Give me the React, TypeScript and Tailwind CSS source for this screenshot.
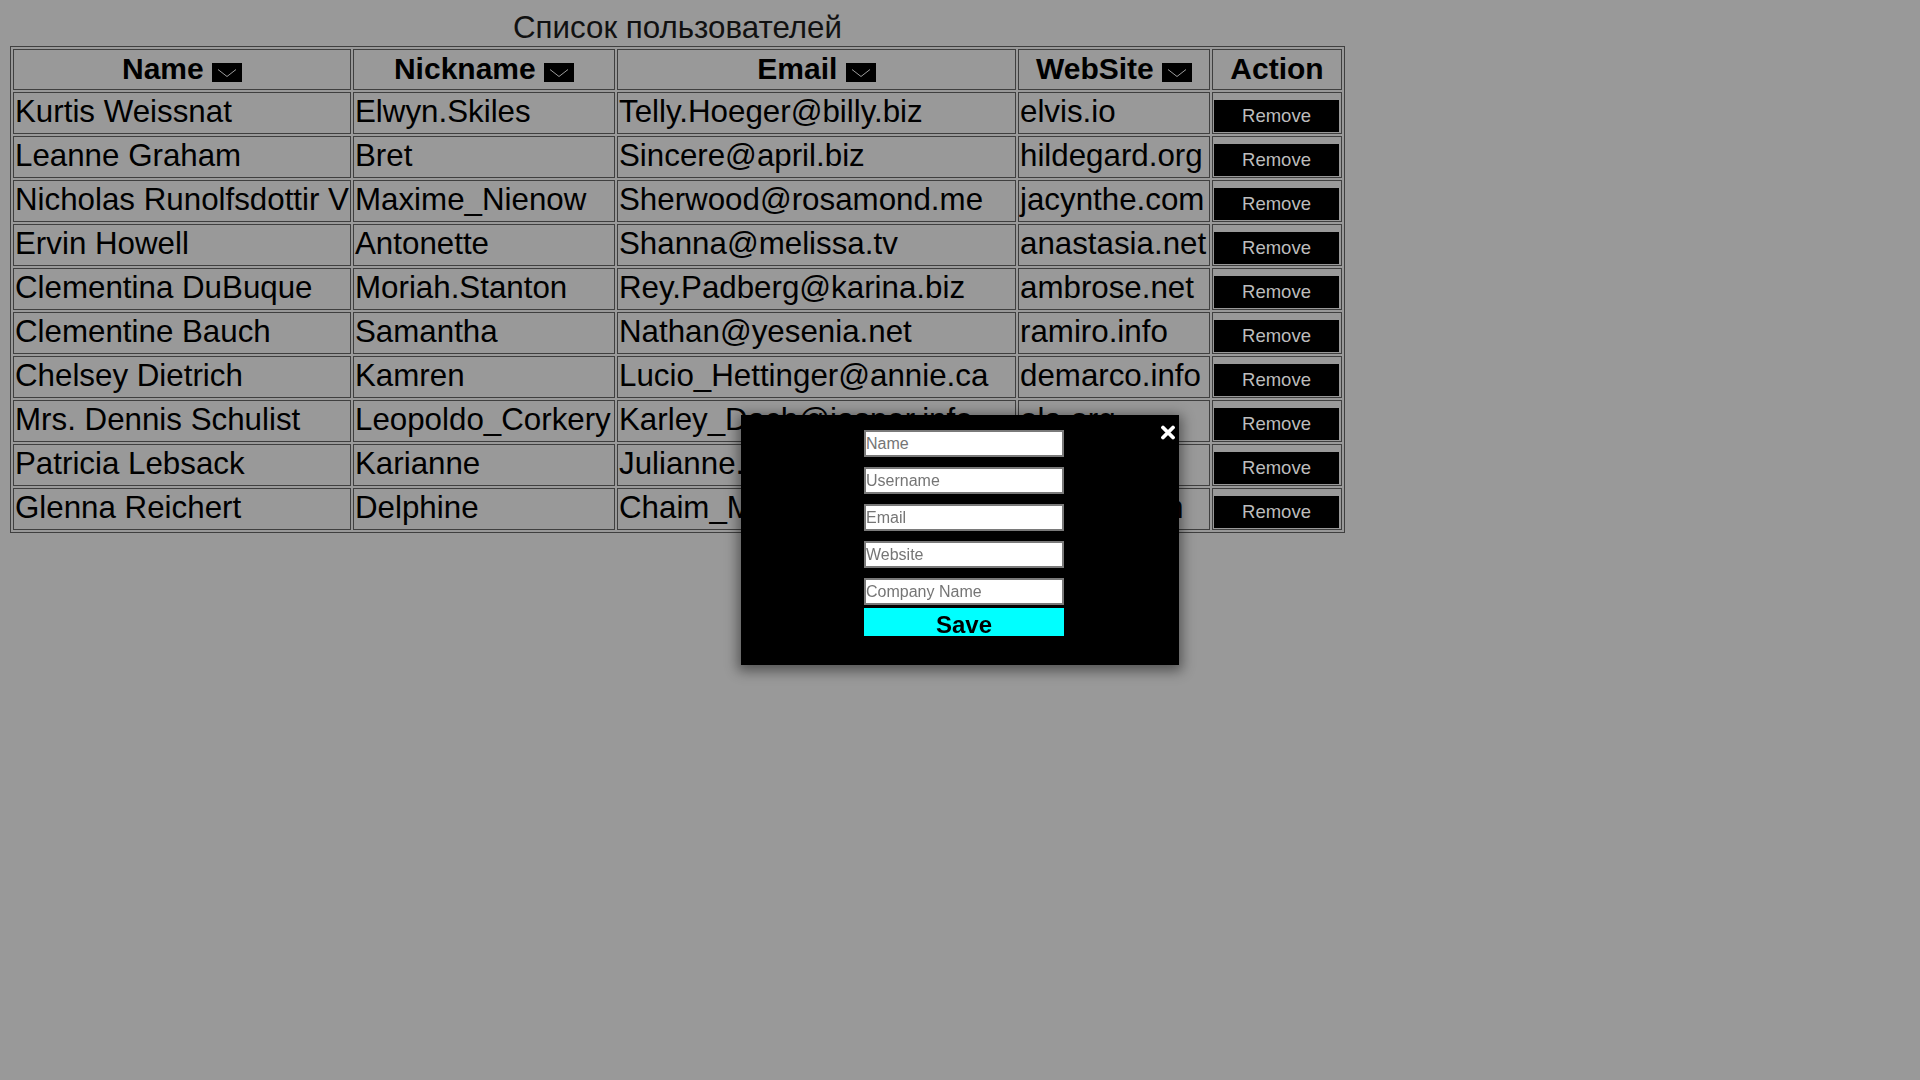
import { useState } from "react"

interface User {
  name: string
  username: string
  email: string
  website: string
}

const users: User[] = [
  { name: "Kurtis Weissnat", username: "Elwyn.Skiles", email: "Telly.Hoeger@billy.biz", website: "elvis.io" },
  { name: "Leanne Graham", username: "Bret", email: "Sincere@april.biz", website: "hildegard.org" },
  { name: "Nicholas Runolfsdottir V", username: "Maxime_Nienow", email: "Sherwood@rosamond.me", website: "jacynthe.com" },
  { name: "Ervin Howell", username: "Antonette", email: "Shanna@melissa.tv", website: "anastasia.net" },
  { name: "Clementina DuBuque", username: "Moriah.Stanton", email: "Rey.Padberg@karina.biz", website: "ambrose.net" },
  { name: "Clementine Bauch", username: "Samantha", email: "Nathan@yesenia.net", website: "ramiro.info" },
  { name: "Chelsey Dietrich", username: "Kamren", email: "Lucio_Hettinger@annie.ca", website: "demarco.info" },
  { name: "Mrs. Dennis Schulist", username: "Leopoldo_Corkery", email: "Karley_Dach@jasper.info", website: "ola.org" },
  { name: "Patricia Lebsack", username: "Karianne", email: "Julianne.OConner@kory.org", website: "kale.io" },
  { name: "Glenna Reichert", username: "Delphine", email: "Chaim_McDermott@dana.io", website: "conrad.com" },
]

const SortBox = () => (
  <span className="inline-block w-[30px] h-[19px] bg-black align-[-3px]">
    <svg width="30" height="19" viewBox="0 0 30 19">
      <polyline points="6,6.5 15,13.5 24,6.5" fill="none" stroke="#9c9c9c" strokeWidth="1" />
    </svg>
  </span>
)

const th = "border border-[#3f3f3f] p-0 text-[30px] font-bold leading-[37px] align-top text-center"
const td = "border border-[#3f3f3f] px-px py-0 text-[31.3px] leading-[37px] align-top whitespace-nowrap overflow-hidden text-left font-normal"

const App = () => {
  const [rows, setRows] = useState(users)
  const fields = ["Name", "Username", "Email", "Website", "Company Name"]

  return (
    <div className="min-h-screen bg-[#999999] px-[10px] pt-[9px] font-['Liberation_Sans',Arial,sans-serif] text-black">
      <table className="table-fixed border-separate border-spacing-[2px] border border-[#3f3f3f] w-[1335px]">
        <caption className="text-[31.3px] leading-[37px] text-[#111]">Список пользователей</caption>
        <colgroup>
          <col className="w-[338px]" />
          <col className="w-[262px]" />
          <col className="w-[399px]" />
          <col className="w-[192px]" />
          <col className="w-[130px]" />
        </colgroup>
        <thead>
          <tr className="h-[41px]">
            <th className={th}>Name <SortBox /></th>
            <th className={th}>Nickname <SortBox /></th>
            <th className={th}>Email <SortBox /></th>
            <th className={th}>WebSite <SortBox /></th>
            <th className={th}>Action</th>
          </tr>
        </thead>
        <tbody>
          {rows.map((u) => (
            <tr key={u.email} className="h-[42px]">
              <td className={td}>{u.name}</td>
              <td className={td}>{u.username}</td>
              <td className={td}>{u.email}</td>
              <td className={td}>{u.website}</td>
              <td className="border border-[#3f3f3f] pl-px pr-[2px] pb-px pt-0 align-bottom">
                <button
                  className="block w-full h-[32px] bg-black text-[#bdbdbd] text-[18.5px] leading-none"
                  onClick={() => setRows(rows.filter((r) => r !== u))}
                >
                  Remove
                </button>
              </td>
            </tr>
          ))}
        </tbody>
      </table>

      {/* Add user modal */}
      <div className="fixed left-1/2 top-1/2 w-[438px] h-[250px] -translate-x-1/2 -translate-y-1/2 bg-black pl-[123px] pt-[15px] shadow-[0_3px_12px_3px_rgba(0,0,0,0.45)]">
        <button className="absolute right-[3px] top-[10px] w-[16px] h-[15px]">
          <svg width="16" height="15" viewBox="0 0 16 15">
            <path d="M3 2.5 L13 12.5 M13 2.5 L3 12.5" stroke="#ffffff" strokeWidth="3.8" strokeLinecap="round" />
          </svg>
        </button>
        <form className="flex flex-col w-[200px]" onSubmit={(e) => e.preventDefault()}>
          <div className="flex flex-col gap-[10px]">
            {fields.map((f) => (
              <input
                key={f}
                placeholder={f}
                className="h-[27px] w-[200px] border-2 border-[#7a7a7a] bg-white px-0 text-[16px] text-black outline-none placeholder:text-[#757575]"
              />
            ))}
          </div>
          <button type="submit" className="mt-[3px] h-[28px] w-[200px] bg-[#00ffff] pt-[3px] text-[24px] font-bold leading-[27px] text-black">
            Save
          </button>
        </form>
      </div>
    </div>
  )
}

export default App
